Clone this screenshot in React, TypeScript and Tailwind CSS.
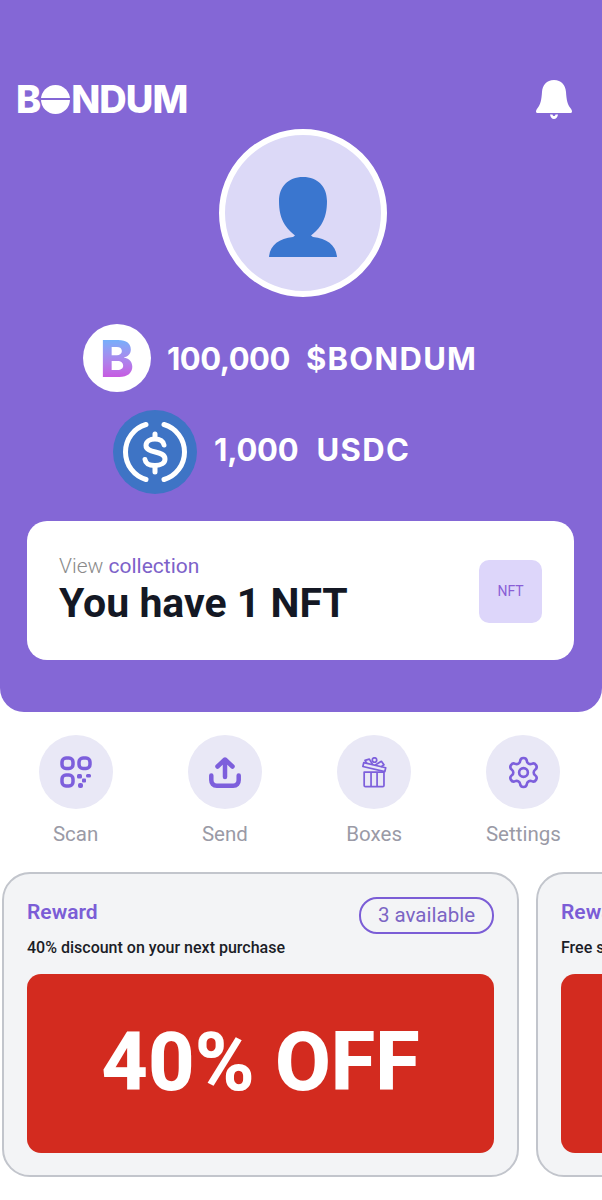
import { Settings } from "lucide-react";

function Bell() {
  return (
    <svg width="36" height="39" viewBox="0 0 36 39" fill="#fff">
      <path d="M18 0C10.500 0 6.500 5 6 12c-.5 8-1.500 12-4 15.500C1 29 0 30.200 0 31.500 0 32.500.8 33 2 33h32c1.200 0 2-.5 2-1.500 0-1.300-1-2.500-2-4-2.500-3.500-3.500-7.500-4-15.500C29.500 5 25.500 0 18 0z" />
      <path d="M14 34.500h2.500c.3 1 .8 1.500 1.500 1.500s1.200-.5 1.500-1.500H22c-.3 2.700-2 4.500-4 4.500s-3.700-1.800-4-4.500z" />
    </svg>
  );
}

function Person() {
  return (
    <svg width="68" height="80" viewBox="0 0 68 80" fill="#3a76cf">
      <path d="M34 0C19 0 10 10 10 24c0 9 1.500 17 6 24 3.500 5 7 8 10 10.500l-2 1.500C10 61.500 1 68 0 80h68c-1-12-10-18.500-24-20l-2-1.500c3-2.500 6.500-5.500 10-10.500 4.500-7 6-15 6-24C58 10 49 0 34 0z" />
    </svg>
  );
}

function UsdcIcon() {
  return (
    <svg width="84" height="84" viewBox="0 0 84 84" fill="none">
      <circle cx="42" cy="42" r="42" fill="#3e74c5" />
      <g stroke="#fff" strokeWidth="5" strokeLinecap="round">
        <path d="M33 14.500C21 18 12.500 29 12.500 42S21 66 33 69.500" />
        <path d="M51 14.500C63 18 71.500 29 71.500 42S63 66 51 69.500" />
        <path d="M51 35c-.5-3.500-4-6-9-6s-9 2.500-9 6.500c0 8.500 19 4.500 19 13.500 0 4-4 6.500-10 6.500s-9.500-2.500-10-6" />
        <path d="M42 24v4M42 57v5" />
      </g>
    </svg>
  );
}

function QrIcon() {
  return (
    <svg width="32" height="32" viewBox="0 0 32 32" fill="none">
      <g stroke="#7d5fdc" strokeWidth="3.500">
        <rect x="2" y="2" width="11" height="10.500" rx="4" />
        <rect x="19" y="2" width="11" height="10.500" rx="4" />
        <rect x="2" y="19" width="11" height="11" rx="4" />
      </g>
      <g fill="#7d5fdc">
        <rect x="17" y="18" width="5" height="4.500" rx="1.500" />
        <rect x="26" y="18" width="5" height="3.500" rx="1.500" />
        <rect x="22" y="22.500" width="4" height="4" rx="1" />
        <rect x="18" y="27" width="5" height="5" rx="2" />
      </g>
    </svg>
  );
}

function SendIcon() {
  return (
    <svg width="32" height="32" viewBox="0 0 32 32" fill="none" stroke="#7d5fdc" strokeWidth="4.500">
      <path d="M16 21V4M8.500 10.500 16 3.500l7.500 7" strokeLinecap="round" strokeLinejoin="round" />
      <path d="M2.300 19.500v4.500c0 3.500 2 5.700 5.500 5.700h16.400c3.500 0 5.500-2.200 5.500-5.700v-4.500" strokeLinecap="round" />
    </svg>
  );
}

function GiftIcon() {
  return (
    <svg width="27" height="31" viewBox="0 0 30 36" fill="none" stroke="#7d5fdc" strokeWidth="2" strokeLinejoin="round">
      <path d="M3 17.500h23v15.500a1.500 1.500 0 0 1-1.500 1.500h-20A1.500 1.500 0 0 1 3 33z" />
      <path d="M11 17.500v17M18 17.500v17" />
      <path d="M1.500 11 27 17l1-4.500L2.500 6.500z" />
      <path d="M13 9 9 2.500 4 4l2 3.500M15.500 9.500 23 5l3 4-3.500 2.500" />
      <circle cx="15" cy="3.500" r="2.600" />
    </svg>
  );
}

const actions = [
  { label: "Scan", icon: <QrIcon /> },
  { label: "Send", icon: <SendIcon /> },
  { label: "Boxes", icon: <GiftIcon /> },
  { label: "Settings", icon: <Settings size={35} strokeWidth={1.8} color="#7d5fdc" /> },
];

function RewardCard({ desc, off, badge }: { desc: string; off: string; badge?: boolean }) {
  return (
    <div className="w-[517px] h-[305px] shrink-0 rounded-[28px] border-2 border-[#c2c5cc] bg-[#f3f4f6] px-[23px] pt-[23px]">
      <div className="flex items-start justify-between h-[37px]">
        <span className="text-[21px] leading-[28px] font-semibold text-[#7b5dd6] mt-[1px]">Reward</span>
        {badge && (
          <span className="w-[135px] h-[37px] flex items-center justify-center rounded-[18px] border-2 border-[#7b5dd6] text-[20.500px] text-[#7b65c4]">
            3 available
          </span>
        )}
      </div>
      <p className="text-[16px] leading-[20px] font-medium text-[#1b1d27] mt-[4px] whitespace-nowrap">{desc}</p>
      <div className="mt-[16px] h-[179px] rounded-[14px] bg-[#d32b1f] flex items-center justify-center">
        <span className="text-[81px] font-extrabold text-white leading-none mb-[2px]">{off}</span>
      </div>
    </div>
  );
}

export default function App() {
  return (
    <div className="relative w-[602px] h-[1200px] overflow-hidden bg-white font-['Roboto',sans-serif]">
      <section className="h-[712px] rounded-b-[24px] bg-[#8467d6] px-[27px] pt-[80px]">
        <div className="flex items-start justify-between h-[49px] ml-[-11px] mr-[3px]">
          <div className="flex items-center h-[38px] text-white font-['Inter',sans-serif] font-extrabold text-[38px] leading-none tracking-[-1px]">
            <span>B</span>
            <span className="relative mx-[1px] w-[29px] h-[29px] rounded-full bg-white">
              <span className="absolute left-0 right-0 top-[13px] h-[2px] bg-[#8467d6]" />
            </span>
            <span>NDUM</span>
          </div>
          <Bell />
        </div>

        <div className="ml-[192px] size-[168px] rounded-full border-[6px] border-white bg-[#dcd9f7] flex items-center justify-center">
          <div className="mt-[8px]">
            <Person />
          </div>
        </div>

        <div className="mt-[27px] ml-[56px] flex items-center gap-[16px] h-[68px]">
          <div className="size-[68px] rounded-full bg-white flex items-center justify-center">
            <span className="font-['Inter',sans-serif] font-extrabold text-[51px] leading-none bg-gradient-to-b from-[#50bcff] to-[#cf40dc] bg-clip-text text-transparent">
              B
            </span>
          </div>
          <div className="flex gap-[16px] font-['Inter',sans-serif] font-bold text-[31px] leading-none text-white">
            <span className="tracking-[-0.500px]">100,000</span>
            <span className="tracking-[1.300px]">$BONDUM</span>
          </div>
        </div>

        <div className="mt-[18px] ml-[86px] flex items-center gap-[17px] h-[84px]">
          <UsdcIcon />
          <div className="flex gap-[18px] mt-[-6px] font-['Inter',sans-serif] font-bold text-[31px] leading-none text-white">
            <span className="tracking-[-0.200px]">1,000</span>
            <span className="tracking-[1.400px]">USDC</span>
          </div>
        </div>

        <div className="mt-[27px] h-[139px] w-[547px] rounded-[20px] bg-white pl-[32px] pr-[32px] flex items-center justify-between">
          <div className="mt-[2px]">
            <p className="text-[21px] leading-[24px] font-light text-[#8b8b8b] mt-[-2px]">
              View <span className="text-[#7d62c9] font-normal">collection</span>
            </p>
            <p className="text-[41px] leading-[50px] font-bold text-[#141824]">You have 1 NFT</p>
          </div>
          <div className="size-[63px] rounded-[10px] bg-[#ddd6fa] flex items-center justify-center text-[14px] text-[#8a5fd6] mb-[-2px]">
            NFT
          </div>
        </div>
      </section>

      <div className="grid grid-cols-4 w-[597px] ml-[1px] mt-[23px]">
        {actions.map((a) => (
          <div key={a.label} className="flex flex-col items-center">
            <div className="size-[74px] rounded-full bg-[#e9e8f6] flex items-center justify-center">{a.icon}</div>
            <span className="mt-[11px] text-[20.500px] leading-[28px] text-[#9a9aa6]">{a.label}</span>
          </div>
        ))}
      </div>

      <div className="flex gap-[17px] pl-[2px] mt-[24px]">
        <RewardCard desc="40% discount on your next purchase" off="40% OFF" badge />
        <RewardCard desc="Free shipping on your next order" off="" />
      </div>
    </div>
  );
}
